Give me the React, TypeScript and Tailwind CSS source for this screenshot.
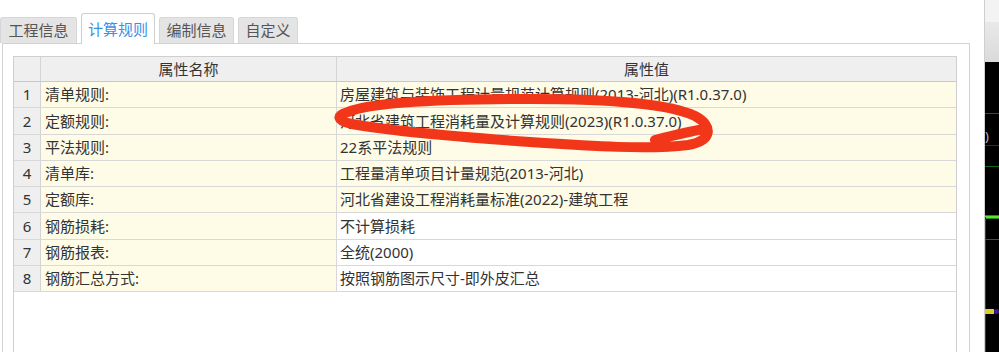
const FONT = { fontFamily: '"Noto Sans", "Noto Sans CJK SC", sans-serif' };

const TABS = [
  { label: "工程信息", w: "w-[77px]", active: false },
  { label: "计算规则", w: "w-[74px]", active: true },
  { label: "编制信息", w: "w-[75px]", active: false },
  { label: "自定义", w: "w-[60px]", active: false },
];

const ROWS = [
  { name: "清单规则:", value: "房屋建筑与装饰工程计量规范计算规则(2013-河北)(R1.0.37.0)", cream: true },
  { name: "定额规则:", value: "河北省建筑工程消耗量及计算规则(2023)(R1.0.37.0)", cream: true },
  { name: "平法规则:", value: "22系平法规则", cream: true },
  { name: "清单库:", value: "工程量清单项目计量规范(2013-河北)", cream: true },
  { name: "定额库:", value: "河北省建设工程消耗量标准(2022)-建筑工程", cream: true },
  { name: "钢筋损耗:", value: "不计算损耗", cream: false },
  { name: "钢筋报表:", value: "全统(2000)", cream: false },
  { name: "钢筋汇总方式:", value: "按照钢筋图示尺寸-即外皮汇总", cream: false },
];

function SideStrip() {
  return (
    <div className="relative flex w-[15px] flex-col border-l border-[#cfcfcf]">
      <div className="h-[22px] bg-[#f3f3f3]" />
      <div className="h-[40px] bg-gradient-to-b from-[#e9e9e9] to-[#dadada]" />
      <div className="relative flex-1 bg-black">
        <div className="absolute left-0 right-0 top-[51px] h-px bg-[#0b6a12]" />
        <span className="absolute left-0 top-[68px] text-[13px] leading-none text-[#bbbbbb]">)</span>
        <div className="absolute left-0 right-0 top-[83px] h-px bg-[#7a0d0d]" />
        <div className="absolute left-0 right-0 top-[104px] h-px bg-[#0b6a12]" />
        <div className="absolute left-0 right-0 top-[153px] h-[4px] border-y border-[#1f8f1f] bg-[#66e22e]" />
        <div className="absolute bottom-0 left-0 top-[155px] w-px bg-[#a01010]" />
        <div className="absolute left-0 right-0 top-[177px] h-px bg-[#c81414]" />
        <div className="absolute left-0 top-[247px] h-[5px] w-[9px] bg-[#d8cf2a]" />
        <div className="absolute left-[9px] top-[247px] h-[5px] w-[5px] rounded-full bg-[#3c1a9a]" />
      </div>
    </div>
  );
}

export default function App() {
  return (
    <div className="relative flex h-[352px] w-[999px] overflow-hidden bg-white text-[15px] text-[#333]" style={FONT}>
      <div className="flex w-[984px] flex-col">
        <div className="flex h-[43px] items-end gap-[4px]">
          {TABS.map((t) => (
            <div
              key={t.label}
              className={
                t.active
                  ? `${t.w} relative z-10 -mb-px flex h-[31px] items-center justify-center rounded-t-[3px] border border-b-0 border-[#cfcfcf] bg-white text-[#3d8fe8]`
                  : `${t.w} flex h-[26px] items-center justify-center rounded-t-[3px] border border-b-0 border-[#d6d6d6] bg-[#e4e4e4] text-[#555]`
              }
            >
              {t.label}
            </div>
          ))}
        </div>
        <div className="ml-[2px] flex w-[968px] flex-1 flex-col border border-b-0 border-[#d2d2d2] bg-white pl-[10px] pr-[12px] pt-[12px]">
          <div className="flex flex-1 flex-col border-x border-t border-[#cfcfcf]">
            <div className="grid h-[25px] grid-cols-[27px_296px_1fr] border-b border-[#c8c8c8] bg-[#efefef]">
              <div className="border-r border-[#d4d4d4]" />
              <div className="flex items-center justify-center border-r border-[#d4d4d4]">属性名称</div>
              <div className="flex items-center justify-center">属性值</div>
            </div>
            {ROWS.map((r, i) => (
              <div key={r.name} className="grid h-[26.25px] grid-cols-[27px_296px_1fr] border-b border-[#d8d8d8]">
                <div className="flex items-center justify-center border-r border-[#d4d4d4] bg-[#efefef]">{i + 1}</div>
                <div className="flex items-center border-r border-[#d8d8d8] bg-[#fefbe7] pl-[4px]">{r.name}</div>
                <div className={`flex items-center pl-[3px] ${r.cream ? "bg-[#fefbe7]" : "bg-white"}`}>{r.value}</div>
              </div>
            ))}
          </div>
        </div>
      </div>
      <SideStrip />
      <svg className="pointer-events-none absolute left-0 top-0" width="999" height="352" viewBox="0 0 999 352">
        <path
          d="M 348 112 C 370 103, 440 99, 530 99 C 610 99, 670 104, 695 116 C 714 126, 712 141, 688 145 C 650 150, 590 146, 530 142 C 460 137, 390 131, 352 124 C 336 121, 336 115, 348 112 Z M 655 140 C 675 135, 692 131, 704 129"
          fill="none"
          stroke="#f2361a"
          strokeWidth="10"
          strokeLinecap="round"
          strokeLinejoin="round"
        />
      </svg>
    </div>
  );
}
